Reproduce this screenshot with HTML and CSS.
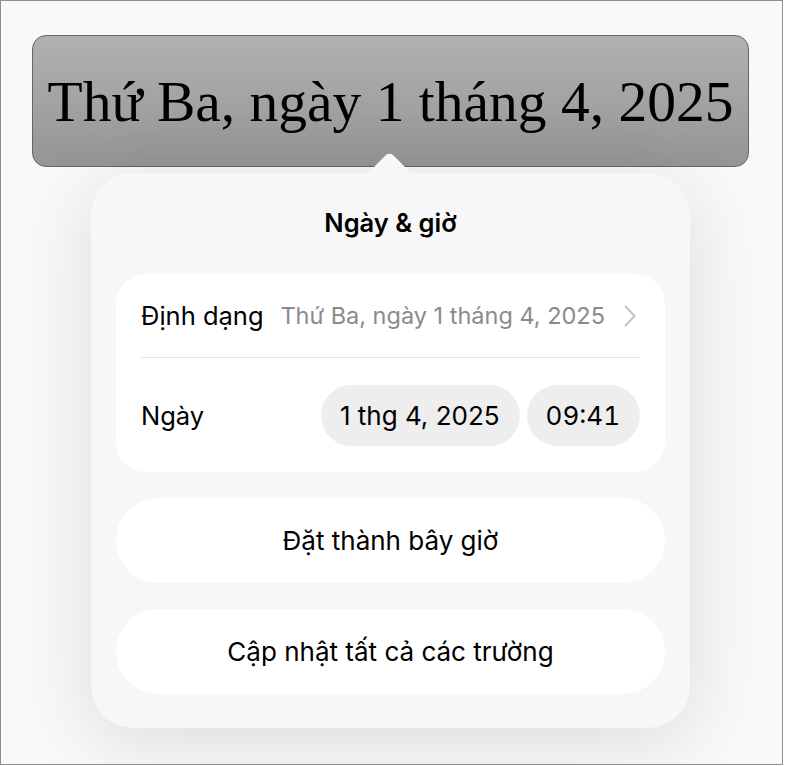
FILE: index.html
```html
<!DOCTYPE html>
<html lang="vi">
<head>
<meta charset="utf-8">
<title>Ngày &amp; giờ</title>
<link rel="stylesheet" href="styles.css">
</head>
<body>
<div class="frame">
  <div class="field"><span class="field-text">Thứ Ba, ngày 1 tháng 4, 2025</span></div>
  <div class="popover">
    <div class="arrow"></div>
    <h2 class="title">Ngày &amp; giờ</h2>
    <div class="card">
      <div class="row row-format">
        <span class="label">Định dạng</span>
        <span class="value">Thứ Ba, ngày 1 tháng 4, 2025</span>
        <svg class="chevron" viewBox="0 0 12 22" width="12" height="22"><polyline points="1.5,1.5 10.5,11 1.5,20.5" fill="none" stroke="#c4c4c7" stroke-width="2" stroke-linecap="round" stroke-linejoin="round"/></svg>
      </div>
      <div class="sep"></div>
      <div class="row row-date">
        <span class="label">Ngày</span>
        <div class="pills">
          <span class="pill">1 thg 4, 2025</span>
          <span class="pill pill-time">09:41</span>
        </div>
      </div>
    </div>
    <button class="btn">Đặt thành bây giờ</button>
    <button class="btn">Cập nhật tất cả các trường</button>
  </div>
</div>
</body>
</html>
```
FILE: styles.css
```css
html, body {
  margin: 0;
  padding: 0;
  background: #ffffff;
}
.frame {
  box-sizing: border-box;
  width: 783px;
  height: 765px;
  border: 1px solid #8f8f8f;
  background: #f9f9f9;
  padding: 34px 0 0 31px;
  overflow: hidden;
  font-family: Inter, "Noto Sans", sans-serif;
}
.field {
  box-sizing: border-box;
  width: 717px;
  height: 132px;
  border: 1px solid #666666;
  border-radius: 14px;
  background: linear-gradient(#b1b1b1, #959595);
  display: flex;
  align-items: center;
  justify-content: center;
}
.field-text {
  font-family: "Liberation Serif", serif;
  font-size: 57.5px;
  color: #000;
  line-height: 1;
  padding-top: 1px;
}
.popover {
  position: relative;
  box-sizing: border-box;
  width: 599px;
  margin: 6px 0 0 59px;
  padding: 35px 25px 34px 25px;
  background: #f7f7f7;
  border-radius: 42px;
  box-shadow: 0 14px 80px rgba(0, 0, 0, 0.12);
}
.arrow {
  position: absolute;
  left: 283px;
  top: -15.5px;
  width: 31px;
  height: 31px;
  background: #f7f7f7;
  transform: rotate(45deg);
  border-top-left-radius: 5px;
}
.title {
  position: relative;
  margin: 0;
  text-align: center;
  font-size: 25.5px;
  font-weight: 600;
  line-height: 30px;
  color: #000;
}
.card {
  position: relative;
  margin-top: 36px;
  background: #ffffff;
  border-radius: 30px;
}
.row {
  display: flex;
  align-items: center;
  padding: 0 25px;
  font-size: 25.5px;
  color: #000;
}
.row-format {
  height: 83px;
  padding-right: 29px;
}
.label {
  flex: none;
}
.value {
  margin-left: auto;
  color: #8a8a8e;
  font-size: 23.5px;
  white-space: nowrap;
}
.chevron {
  flex: none;
  margin-left: 19px;
}
.sep {
  height: 1px;
  margin: 0 25px;
  background: #e4e4e6;
}
.row-date {
  height: 114px;
}
.pills {
  margin-left: auto;
  display: flex;
  gap: 7px;
}
.pill {
  height: 61px;
  display: flex;
  align-items: center;
  padding: 0 20px 0 19px;
  background: #eeeeef;
  border-radius: 31px;
  font-size: 26px;
}
.pill-time {
  font-feature-settings: "tnum" 1;
}
.btn {
  display: block;
  width: 100%;
  height: 85px;
  margin-top: 26px;
  border: 0;
  border-radius: 42px;
  background: #ffffff;
  font-family: Inter, "Noto Sans", sans-serif;
  font-size: 26px;
  color: #000;
  padding: 0;
}
```
